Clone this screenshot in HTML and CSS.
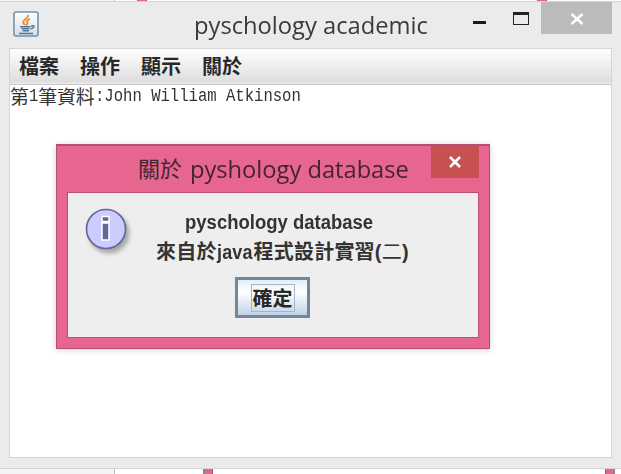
FILE: index.html
```html
<!DOCTYPE html>
<html lang="zh-Hant">
<head>
<meta charset="utf-8">
<title>pyschology academic</title>
<link rel="stylesheet" href="styles.css">
</head>
<body>
<div class="strip strip-top"><i class="seam"></i><i class="pin pin-left"></i><i class="pin pin-right"></i></div>
<main class="window">
  <header class="titlebar">
    <svg class="java" width="26" height="26" viewBox="0 0 26 26">
      <defs><linearGradient id="jg" x1="0" y1="0" x2="0" y2="1"><stop offset="0" stop-color="#fff"/><stop offset="1" stop-color="#d3dee6"/></linearGradient></defs>
      <rect x="1" y="1" width="24" height="24" rx="2" fill="url(#jg)" stroke="#7193ad" stroke-width="1.6"/>
      <path d="M14.500 4Q16 6 12 8.500Q8.500 11 12 14M17 8Q12.500 10 14.500 11.500Q15 13 13 14.500" fill="none" stroke="#ee8a35" stroke-width="1.900"/>
      <path d="M7 15.800H17.500M8.500 17.800H16.500M9.500 19.700H16M18 15.300Q21.500 14 20.700 16Q20 17.500 17.500 18M6 22.500H20" fill="none" stroke="#4d7899" stroke-width="1.600"/>
    </svg>
    <h1 class="title">pyschology academic</h1>
    <div class="controls">
      <i class="minimize"></i><i class="maximize"></i>
      <span class="close"><svg width="14" height="12" viewBox="0 0 14 12"><path d="M1.500 1L12.500 11M12.500 1L1.500 11" stroke="#fff" stroke-width="2.500"/></svg></span>
    </div>
  </header>
  <section class="client">
    <nav class="menu"><span>檔案</span><span>操作</span><span>顯示</span><span>關於</span></nav>
    <p class="record"><span class="han">第</span><span class="mono one">1</span><span class="han">筆資料</span><span class="mono">:John William Atkinson</span></p>
  </section>
</main>
<div class="strip strip-bottom"><i class="seam"></i><i class="pin pin-left"></i><i class="pin pin-right"></i></div>

<div class="dialog">
  <div class="dialog-bar">
    <h2 class="dialog-title"><span class="dt-han">關於</span><span class="dt-latin">pyshology database</span></h2>
    <span class="dialog-close"><svg width="14" height="12" viewBox="0 0 14 12"><path d="M2 1L12 11M12 1L2 11" stroke="#fff" stroke-width="2.500"/></svg></span>
  </div>
  <div class="dialog-body">
    <svg class="info" width="50" height="50" viewBox="0 0 50 50">
      <circle cx="21" cy="21" r="19.500" fill="#ccccff" stroke="#6666a0" stroke-width="1.700"/>
      <path d="M17 8.500h7v5h-7zM17 15h7v17h-7z" fill="#666699" stroke="#fff" stroke-width="1.500"/>
    </svg>
    <div class="message">
      <p class="line-one">pyschology database</p>
      <p class="line-two"><span>來自於</span><span class="java-word">java</span><span>程式設計實習</span><span>(</span><span class="two">二</span><span>)</span></p>
    </div>
    <button class="ok"><span>確定</span></button>
  </div>
</div>
</body>
</html>
```
FILE: styles.css
```css
* { box-sizing: border-box; }
html, body { margin: 0; height: 100%; overflow: hidden; }
body { position: relative; display: flex; flex-direction: column; background: #fff; font-family: "Open Sans", "Noto Sans CJK TC", sans-serif; color: #2b2b2b; }
h1, h2, p { margin: 0; white-space: nowrap; }
h1, h2 { font-weight: 400; }
i { display: block; }
.strip { position: relative; background: linear-gradient(90deg, #f4f4f4 114px, #fff 114px); }
.strip-top { height: 1px; }
.strip-bottom { height: 5px; }
.seam, .pin { position: absolute; top: 0; height: 100%; }
.seam { left: 114px; width: 1px; background: #bbb; }
.pin { width: 10px; background: #e66690; border: solid #b84f78; border-width: 0 1px; }
.strip-top .pin-left { left: 137px; }
.strip-top .pin-right { left: 537px; }
.strip-bottom .pin-left { left: 203px; border-left: 2px solid #888; }
.strip-bottom .pin-right { left: 605px; border-right: 2px solid #888; }
.window { height: 468px; background: #ebebeb; border: solid #d3d3d3; border-width: 1px 0; display: flex; flex-direction: column; padding: 0 9px 10px; }
.titlebar { height: 46px; flex: none; display: grid; grid-template-columns: 185px 1fr 140px; }
.java { margin: 9px 0 0 4px; }
.title { font-size: 24px; line-height: 46px; color: #3a3a3a; transform: scaleX(.988); transform-origin: left; }
.controls { display: flex; justify-content: flex-end; }
.minimize { width: 13px; height: 3px; background: #1b1b1b; margin: 19px 27px 0 0; }
.maximize { width: 16px; height: 13px; border: 1px solid #222; border-top-width: 3px; margin: 10px 12px 0 0; }
.close { width: 71px; height: 32px; background: #bbb; display: grid; place-items: center; }
.close svg { margin-top: 2px; }
.client { width: 603px; flex: 1; background: #fff; border: 1px solid #d5d5d5; }
.menu { height: 36px; background: linear-gradient(#fff, #ddd 33px, #ebebeb 34px); border-bottom: 1px solid #c8c8c8; display: flex; gap: 21px; padding-left: 9px; font: 700 20px/33px "Noto Sans CJK TC", sans-serif; color: #282828; }
.record { display: flex; height: 22px; line-height: 22px; color: #333; }
.han { font-family: "Noto Sans CJK TC", sans-serif; font-size: 18.800px; font-weight: 400; }
.mono { display: block; font-family: "Liberation Mono", monospace; font-size: 18px; line-height: 23px; transform: scaleX(.866); transform-origin: left; }
.one { width: 9.400px; }
.dialog { position: absolute; left: 56px; top: 144px; width: 434px; height: 205px; background: #e66690; border: 1px solid #b64d73; border-top-width: 2px; box-shadow: 0 1px 6px rgba(0,0,0,.18); padding: 0 10px 10px; display: flex; flex-direction: column; }
.dialog-bar { height: 46px; display: flex; justify-content: space-between; }
.dialog-title { display: flex; gap: 8px; margin-left: 71px; font-size: 24px; line-height: 45px; color: #45242f; }
.dt-han { font-size: 22px; }
.dt-latin { transform: scaleX(.986); transform-origin: left; }
.dialog-close { width: 48px; height: 32px; background: #c75050; display: grid; place-items: center; }
.dialog-body { flex: 1; background: #eee; border: 1px solid #bd4e75; display: grid; grid-template: 84px 1fr / 88px 1fr; }
.info { margin: 15px 0 0 17px; filter: drop-shadow(3px 4px 2px rgba(0,0,0,.3)); }
.message { font: 700 20px/30px "Liberation Sans", "Noto Sans CJK TC", sans-serif; color: #333; padding-top: 14px; }
.line-one { margin-left: 29px; transform: scaleX(.925); transform-origin: left; }
.line-two { display: flex; line-height: 31px; letter-spacing: .2px; }
.java-word { width: 37px; transform: scaleX(.9); transform-origin: left; }
.two { font-weight: 400; }
.ok { grid-column: 1 / 3; justify-self: start; margin: 0 0 0 167px; width: 75px; height: 41px; padding: 0; border: 3px solid #748799; background: linear-gradient(#e2edf7, #fff 35%, #bfd3e7); display: grid; place-items: center; font: 700 20px/26px "Noto Sans CJK TC", sans-serif; color: #282828; }
.ok span { border: 1px solid #a3b8cc; height: 28px; width: 44px; display: grid; place-items: center; }
```
